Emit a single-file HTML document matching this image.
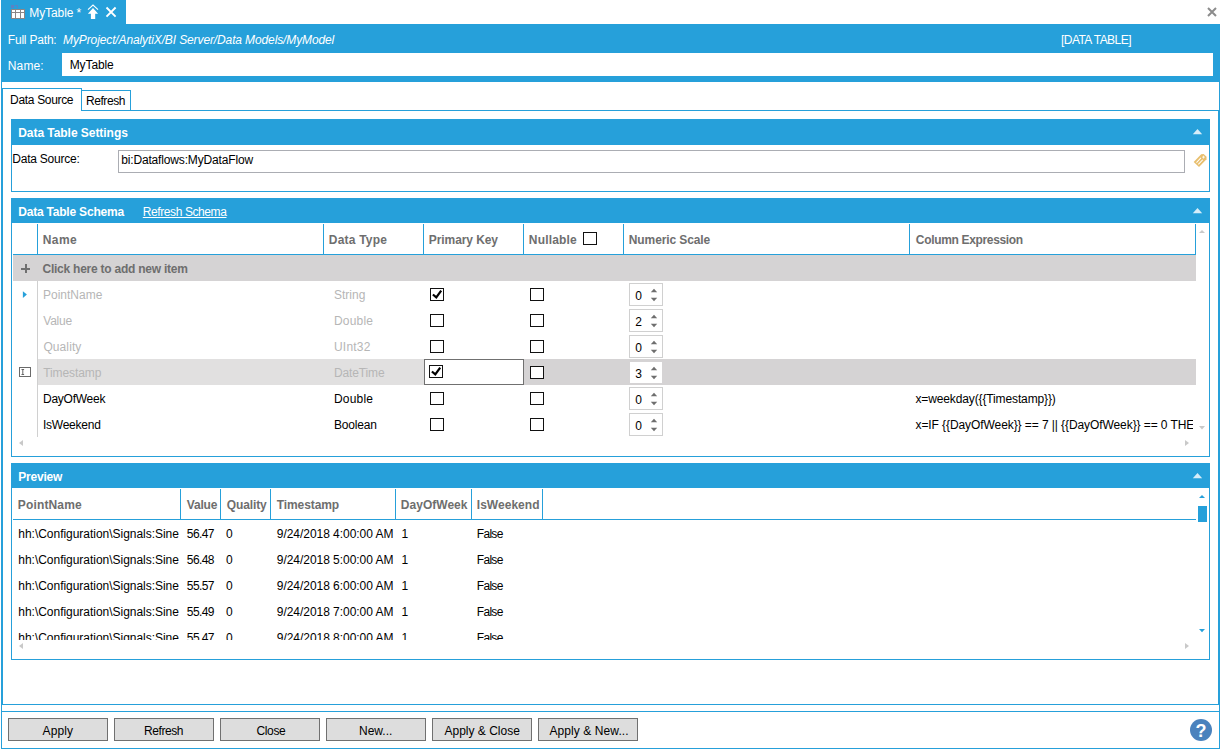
<!DOCTYPE html><html><head><meta charset="utf-8"><title>MyTable</title><style>
html,body{margin:0;padding:0;background:#fff;}
body{width:1220px;height:749px;position:relative;overflow:hidden;font-family:"Liberation Sans",sans-serif;font-size:12px;}
.a{position:absolute;}
.t{position:absolute;white-space:nowrap;line-height:14px;height:14px;font-size:12px;transform-origin:0 0;}
.w{color:#fff;} .k{color:#000;} .d{color:#b6b6b6;} .h{color:#6e6e6e;}
.b{font-weight:bold;} .i{font-style:italic;} .u{text-decoration:underline;}
.bl{background:#26A0DA;}
.cb{position:absolute;width:12px;height:11px;border:1px solid #111;background:#fff;}
.num{position:absolute;width:32px;height:21px;border:1px solid #d0d0d0;background:#fff;}
.btn{position:absolute;top:718px;width:98px;height:21px;border:1px solid #707070;background:#dddddd;}
.clip{position:absolute;overflow:hidden;}
</style></head><body>
<div class="a" style="left:1px;top:0px;width:1px;height:749px;background:#26A0DA;"></div>
<div class="a" style="left:1219px;top:24px;width:1px;height:725px;background:#26A0DA;"></div>
<div class="a" style="left:1px;top:748px;width:1219px;height:1px;background:#26A0DA;"></div>
<div class="a" style="left:1px;top:0px;width:125px;height:24px;background:#26A0DA;"></div>
<div class="a" style="left:1px;top:24px;width:1219px;height:58px;background:#26A0DA;"></div>
<div class="a" style="left:62px;top:53px;width:1151px;height:23px;background:#fff;"></div>
<div class="a" style="left:2px;top:110px;width:1217px;height:1px;background:#26A0DA;"></div>
<div class="a" style="left:2px;top:88px;width:1px;height:617px;background:#26A0DA;"></div>
<div class="a" style="left:1218px;top:110px;width:1px;height:595px;background:#26A0DA;"></div>
<div class="a" style="left:2px;top:704px;width:1217px;height:1px;background:#26A0DA;"></div>
<div class="a" style="left:2px;top:711px;width:1217px;height:1px;background:#26A0DA;"></div>
<div class="a" style="left:2px;top:88px;width:80px;height:1px;background:#26A0DA;"></div>
<div class="a" style="left:81px;top:88px;width:1px;height:23px;background:#26A0DA;"></div>
<div class="a" style="left:3px;top:110px;width:78px;height:1px;background:#fff;"></div>
<div class="a" style="left:81px;top:90px;width:50px;height:1px;background:#26A0DA;"></div>
<div class="a" style="left:130px;top:90px;width:1px;height:20px;background:#26A0DA;"></div>
<div class="a" style="left:11px;top:119px;width:1199px;height:73px;background:#26A0DA;"></div>
<div class="a" style="left:12px;top:145px;width:1197px;height:46px;background:#fff;"></div>
<svg class="a" style="left:1191px;top:128px" width="13" height="8" viewBox="0 0 13 8"><path d="M1.8 6.2 L6.5 1 L11.2 6.2 Z" fill="#d6edf9"/></svg>
<div class="a" style="left:118px;top:150px;width:1065px;height:21px;border:1px solid #abadb3;background:#fff"></div>
<svg class="a" style="left:1192px;top:152px" width="17" height="17" viewBox="0 0 17 17"><g transform="translate(8.45 8.3) rotate(-46)"><path d="M-5.9 -3.7 H4.9 L6.7 -2 V2 L4.9 3.7 H-5.9 Z" fill="#e8bf6e"/><path d="M-4.4 -1.3H2M-4.4 1.3H2" stroke="#fff" stroke-width="1"/><path d="M3.4 -1 L5.4 1 M5.4 -1 L3.4 1" stroke="#fff" stroke-width="0.7"/></g></svg>
<div class="a" style="left:11px;top:198px;width:1199px;height:259px;background:#26A0DA;"></div>
<div class="a" style="left:12px;top:223px;width:1197px;height:233px;background:#fff;"></div>
<svg class="a" style="left:1191px;top:207px" width="13" height="8" viewBox="0 0 13 8"><path d="M1.8 6.2 L6.5 1 L11.2 6.2 Z" fill="#d6edf9"/></svg>
<div class="a" style="left:37px;top:224px;width:1px;height:30px;background:#26A0DA;"></div>
<div class="a" style="left:323px;top:224px;width:1px;height:30px;background:#26A0DA;"></div>
<div class="a" style="left:423px;top:224px;width:1px;height:30px;background:#26A0DA;"></div>
<div class="a" style="left:523px;top:224px;width:1px;height:30px;background:#26A0DA;"></div>
<div class="a" style="left:623px;top:224px;width:1px;height:30px;background:#26A0DA;"></div>
<div class="a" style="left:909px;top:224px;width:1px;height:30px;background:#26A0DA;"></div>
<div class="a" style="left:1195px;top:224px;width:1px;height:30px;background:#26A0DA;"></div>
<div class="a" style="left:13px;top:254px;width:1183px;height:1px;background:#26A0DA;"></div>
<div class="a" style="left:13px;top:255px;width:1183px;height:26px;background:#d5d3d4;"></div>
<div class="a" style="left:21px;top:267.7px;width:9.3px;height:2px;background:#707070;"></div>
<div class="a" style="left:24.6px;top:263.8px;width:2px;height:9.6px;background:#707070;"></div>
<div class="a" style="left:37px;top:281px;width:1px;height:156px;background:#d0d0d0;"></div>
<div class="a" style="left:38px;top:359px;width:386px;height:26px;background:#e1e0e0;"></div>
<div class="a" style="left:424px;top:359px;width:772px;height:26px;background:#d5d3d4;"></div>
<div class="a" style="left:424px;top:359px;width:98px;height:24px;border:1px solid #707070;background:#fff"></div>
<svg class="a" style="left:21px;top:290px" width="7" height="10" viewBox="0 0 7 10"><path d="M1.9 1.2 L5.9 4.6 L1.9 8 Z" fill="#26A0DA"/></svg>
<svg class="a" style="left:19px;top:367px" width="12" height="10" viewBox="0 0 12 10"><rect x="0.5" y="0.5" width="11" height="9" fill="#fff" stroke="#6a6a6a" stroke-width="1"/><path d="M2.5 2.5h2.6M3.8 2.5v5M2.5 7.5h2.6" stroke="#666" stroke-width="1" fill="none"/></svg>
<div class="cb" style="left:583px;top:232px"></div>
<div class="cb" style="left:430px;top:288px"></div>
<div class="cb" style="left:530px;top:288px"></div>
<svg class="a" style="left:430px;top:288px" width="14" height="13" viewBox="0 0 14 13"><path d="M2.9 6.5 L6.3 9.4 L11.2 2.7" stroke="#000" stroke-width="2.2" fill="none"/></svg>
<div class="num" style="left:629px;top:283px"></div>
<svg class="a" style="left:649px;top:287px" width="10" height="7" viewBox="0 0 10 7"><path d="M1.8 5.2 L5 1.8 L8.2 5.2 Z" fill="#6e6e6e"/></svg>
<svg class="a" style="left:649px;top:296px" width="10" height="7" viewBox="0 0 10 7"><path d="M1.8 1.8 L5 5.2 L8.2 1.8 Z" fill="#6e6e6e"/></svg>
<div class="cb" style="left:430px;top:314px"></div>
<div class="cb" style="left:530px;top:314px"></div>
<div class="num" style="left:629px;top:309px"></div>
<svg class="a" style="left:649px;top:313px" width="10" height="7" viewBox="0 0 10 7"><path d="M1.8 5.2 L5 1.8 L8.2 5.2 Z" fill="#6e6e6e"/></svg>
<svg class="a" style="left:649px;top:322px" width="10" height="7" viewBox="0 0 10 7"><path d="M1.8 1.8 L5 5.2 L8.2 1.8 Z" fill="#6e6e6e"/></svg>
<div class="cb" style="left:430px;top:340px"></div>
<div class="cb" style="left:530px;top:340px"></div>
<div class="num" style="left:629px;top:335px"></div>
<svg class="a" style="left:649px;top:339px" width="10" height="7" viewBox="0 0 10 7"><path d="M1.8 5.2 L5 1.8 L8.2 5.2 Z" fill="#6e6e6e"/></svg>
<svg class="a" style="left:649px;top:348px" width="10" height="7" viewBox="0 0 10 7"><path d="M1.8 1.8 L5 5.2 L8.2 1.8 Z" fill="#6e6e6e"/></svg>
<div class="cb" style="left:429px;top:365px"></div>
<div class="cb" style="left:530px;top:366px"></div>
<svg class="a" style="left:429px;top:365px" width="14" height="13" viewBox="0 0 14 13"><path d="M2.9 6.5 L6.3 9.4 L11.2 2.7" stroke="#000" stroke-width="2.2" fill="none"/></svg>
<div class="a" style="left:630px;top:362px;width:32px;height:21px;background:#fff;"></div>
<svg class="a" style="left:649px;top:365px" width="10" height="7" viewBox="0 0 10 7"><path d="M1.8 5.2 L5 1.8 L8.2 5.2 Z" fill="#6e6e6e"/></svg>
<svg class="a" style="left:649px;top:374px" width="10" height="7" viewBox="0 0 10 7"><path d="M1.8 1.8 L5 5.2 L8.2 1.8 Z" fill="#6e6e6e"/></svg>
<div class="cb" style="left:430px;top:392px"></div>
<div class="cb" style="left:530px;top:392px"></div>
<div class="num" style="left:629px;top:387px"></div>
<svg class="a" style="left:649px;top:391px" width="10" height="7" viewBox="0 0 10 7"><path d="M1.8 5.2 L5 1.8 L8.2 5.2 Z" fill="#6e6e6e"/></svg>
<svg class="a" style="left:649px;top:400px" width="10" height="7" viewBox="0 0 10 7"><path d="M1.8 1.8 L5 5.2 L8.2 1.8 Z" fill="#6e6e6e"/></svg>
<div class="cb" style="left:430px;top:418px"></div>
<div class="cb" style="left:530px;top:418px"></div>
<div class="num" style="left:629px;top:413px"></div>
<svg class="a" style="left:649px;top:417px" width="10" height="7" viewBox="0 0 10 7"><path d="M1.8 5.2 L5 1.8 L8.2 5.2 Z" fill="#6e6e6e"/></svg>
<svg class="a" style="left:649px;top:426px" width="10" height="7" viewBox="0 0 10 7"><path d="M1.8 1.8 L5 5.2 L8.2 1.8 Z" fill="#6e6e6e"/></svg>
<svg class="a" style="left:1198px;top:229px" width="9" height="6" viewBox="0 0 9 6"><path d="M1 4 L4 1 L7 4 Z" fill="#c9c9c9"/></svg>
<svg class="a" style="left:1198px;top:425px" width="9" height="6" viewBox="0 0 9 6"><path d="M1 1 L4 4.4 L7 1 Z" fill="#c9c9c9"/></svg>
<svg class="a" style="left:18px;top:439px" width="7" height="9" viewBox="0 0 7 9"><path d="M5 1 L1 4 L5 7 Z" fill="#c9c9c9"/></svg>
<svg class="a" style="left:1184px;top:439px" width="7" height="9" viewBox="0 0 7 9"><path d="M1 1 L5 4 L1 7 Z" fill="#c9c9c9"/></svg>
<div class="a" style="left:11px;top:463px;width:1199px;height:197px;background:#26A0DA;"></div>
<div class="a" style="left:12px;top:488px;width:1197px;height:171px;background:#fff;"></div>
<svg class="a" style="left:1191px;top:472px" width="13" height="8" viewBox="0 0 13 8"><path d="M1.8 6.2 L6.5 1 L11.2 6.2 Z" fill="#d6edf9"/></svg>
<div class="a" style="left:180px;top:489px;width:1px;height:31px;background:#26A0DA;"></div>
<div class="a" style="left:220px;top:489px;width:1px;height:31px;background:#26A0DA;"></div>
<div class="a" style="left:270px;top:489px;width:1px;height:31px;background:#26A0DA;"></div>
<div class="a" style="left:395px;top:489px;width:1px;height:31px;background:#26A0DA;"></div>
<div class="a" style="left:471px;top:489px;width:1px;height:31px;background:#26A0DA;"></div>
<div class="a" style="left:542px;top:489px;width:1px;height:31px;background:#26A0DA;"></div>
<div class="a" style="left:13px;top:519px;width:1183px;height:1px;background:#26A0DA;"></div>
<svg class="a" style="left:1198px;top:494px" width="9" height="6" viewBox="0 0 9 6"><path d="M1 4 L4 1 L7 4 Z" fill="#26A0DA"/></svg>
<div class="a" style="left:1198px;top:506px;width:9px;height:16px;background:#26A0DA;"></div>
<svg class="a" style="left:1198px;top:628px" width="9" height="6" viewBox="0 0 9 6"><path d="M1 1 L4 4.2 L7 1 Z" fill="#26A0DA"/></svg>
<svg class="a" style="left:18px;top:642px" width="7" height="9" viewBox="0 0 7 9"><path d="M5 1 L1 4 L5 7 Z" fill="#c9c9c9"/></svg>
<svg class="a" style="left:1184px;top:642px" width="7" height="9" viewBox="0 0 7 9"><path d="M1 1 L5 4 L1 7 Z" fill="#c9c9c9"/></svg>
<div class="btn" style="left:8px"></div>
<div class="btn" style="left:114px"></div>
<div class="btn" style="left:220px"></div>
<div class="btn" style="left:326px"></div>
<div class="btn" style="left:432px"></div>
<div class="btn" style="left:538px"></div>
<div class="a" style="left:1190px;top:719px;width:22px;height:22px;border-radius:11px;background:#4a82bd;"></div>
<div class="t" style="left:1195.6px;top:722px;color:#fff;font-weight:bold;font-size:18px;line-height:18px;height:18px">?</div>
<svg class="a" style="left:1206px;top:6px" width="12" height="12" viewBox="0 0 12 12"><path d="M2 2 L10 10 M10 2 L2 10" stroke="#8c8c8c" stroke-width="2" fill="none"/></svg>
<div class="a" style="left:11px;top:9px;width:14px;height:10px;background:#8b8686;"></div>
<div class="a" style="left:12px;top:10px;width:3px;height:2px;background:#fff;"></div>
<div class="a" style="left:16px;top:10px;width:4px;height:2px;background:#fff;"></div>
<div class="a" style="left:21px;top:10px;width:3px;height:2px;background:#fff;"></div>
<div class="a" style="left:12px;top:13px;width:3px;height:5px;background:#fff;"></div>
<div class="a" style="left:16px;top:13px;width:4px;height:5px;background:#fff;"></div>
<div class="a" style="left:21px;top:13px;width:3px;height:5px;background:#fff;"></div>
<div class="a" style="left:11px;top:5px;width:3px;height:3px;background:#5b82c4;"></div>
<div class="a" style="left:15px;top:5px;width:3px;height:1px;background:#5b82c4;"></div>
<div class="a" style="left:17px;top:5px;width:1px;height:3px;background:#5b82c4;"></div>
<svg class="a" style="left:87px;top:4px" width="12" height="16" viewBox="0 0 12 16"><path d="M1 5.6 L6 1.1 L11 5.6" stroke="#fff" stroke-width="1.1" fill="none"/><path d="M6 4.1 L11.1 9.7 H8.2 V14.9 H3.9 V9.7 H0.9 Z" fill="#fff"/></svg>
<svg class="a" style="left:105px;top:6px" width="12" height="12" viewBox="0 0 12 12"><path d="M1.5 1.5 L10.6 10.6 M10.6 1.5 L1.5 10.6" stroke="#fff" stroke-width="1.9" fill="none"/></svg>
<div class="t w" style="left:29.3px;top:6px;letter-spacing:-0.1px;">MyTable *</div>
<div class="t w" style="left:7.8px;top:33px;letter-spacing:-0.2px;">Full Path:</div>
<div class="t w i" style="left:63.1px;top:33px;letter-spacing:-0.119px;">MyProject/AnalytiX/BI Server/Data Models/MyModel</div>
<div class="t w" style="left:1061px;top:33px;letter-spacing:-0.545px;">[DATA TABLE]</div>
<div class="t w" style="left:7.8px;top:59px;letter-spacing:0.125px;">Name:</div>
<div class="t k" style="left:69.7px;top:58px;letter-spacing:-0.1px;">MyTable</div>
<div class="t k" style="left:10.1px;top:93px;letter-spacing:-0.33px;">Data Source</div>
<div class="t k" style="left:86px;top:94px;letter-spacing:-0.433px;">Refresh</div>
<div class="t w b" style="left:18.2px;top:126px;letter-spacing:-0.044px;">Data Table Settings</div>
<div class="t k" style="left:12.3px;top:152px;letter-spacing:-0.236px;">Data Source:</div>
<div class="t k" style="left:121.2px;top:153px;letter-spacing:-0.155px;">bi:Dataflows:MyDataFlow</div>
<div class="t w b" style="left:18.2px;top:205px;letter-spacing:-0.2px;">Data Table Schema</div>
<div class="t w u" style="left:142.8px;top:205px;letter-spacing:-0.408px;">Refresh Schema</div>
<div class="t h b" style="left:42.8px;top:233px;letter-spacing:0.4px;">Name</div>
<div class="t h b" style="left:328.8px;top:233px;letter-spacing:0.212px;">Data Type</div>
<div class="t h b" style="left:428.8px;top:233px;letter-spacing:-0.08px;">Primary Key</div>
<div class="t h b" style="left:528.8px;top:233px;letter-spacing:0.171px;">Nullable</div>
<div class="t h b" style="left:628.8px;top:233px;letter-spacing:-0.108px;">Numeric Scale</div>
<div class="t h b" style="left:915.8px;top:233px;letter-spacing:-0.331px;">Column Expression</div>
<div class="t h b" style="left:42.5px;top:262px;letter-spacing:-0.24px;">Click here to add new item</div>
<div class="t d" style="left:43px;top:288px;">PointName</div>
<div class="t d" style="left:334px;top:288px;">String</div>
<div class="t k" style="left:635.3px;top:289px;">0</div>
<div class="t d" style="left:43.2px;top:314px;letter-spacing:-0.175px;">Value</div>
<div class="t d" style="left:334px;top:314px;letter-spacing:0.2px;">Double</div>
<div class="t k" style="left:635.3px;top:315px;">2</div>
<div class="t d" style="left:43.4px;top:340px;letter-spacing:0.1px;">Quality</div>
<div class="t d" style="left:334px;top:340px;letter-spacing:0.2px;">UInt32</div>
<div class="t k" style="left:635.3px;top:341px;">0</div>
<div class="t d" style="left:43.2px;top:366px;letter-spacing:-0.088px;">Timestamp</div>
<div class="t d" style="left:334px;top:366px;letter-spacing:-0.143px;">DateTime</div>
<div class="t k" style="left:635.3px;top:367px;">3</div>
<div class="t k" style="left:43px;top:392px;letter-spacing:-0.25px;">DayOfWeek</div>
<div class="t k" style="left:334px;top:392px;letter-spacing:0.2px;">Double</div>
<div class="t k" style="left:635.3px;top:393px;">0</div>
<div class="t k" style="left:43px;top:418px;letter-spacing:-0.25px;">IsWeekend</div>
<div class="t k" style="left:334px;top:418px;letter-spacing:-0.167px;">Boolean</div>
<div class="t k" style="left:635.3px;top:419px;">0</div>
<div class="t k" style="left:915.5px;top:392px;letter-spacing:-0.13px;">x=weekday({{Timestamp}})</div>
<div class="clip" style="left:0;top:0;width:1193px;height:749px"><div class="t k" style="left:915.5px;top:418px;letter-spacing:-0.082px;">x=IF {{DayOfWeek}} == 7 || {{DayOfWeek}} == 0 THEN</div></div>
<div class="t w b" style="left:18.2px;top:470px;letter-spacing:-0.2px;">Preview</div>
<div class="t h b" style="left:17.8px;top:498px;letter-spacing:0.15px;">PointName</div>
<div class="t h b" style="left:186.8px;top:498px;letter-spacing:-0.2px;">Value</div>
<div class="t h b" style="left:226.8px;top:498px;letter-spacing:-0.133px;">Quality</div>
<div class="t h b" style="left:276.8px;top:498px;letter-spacing:-0.1px;">Timestamp</div>
<div class="t h b" style="left:400.8px;top:498px;letter-spacing:0.025px;">DayOfWeek</div>
<div class="t h b" style="left:476.8px;top:498px;letter-spacing:0.025px;">IsWeekend</div>
<div class="t k p" style="left:18.3px;top:527px;letter-spacing:-0.028px;">hh:\Configuration\Signals:Sine</div>
<div class="t k p" style="left:186.8px;top:527px;letter-spacing:-0.575px;">56.47</div>
<div class="t k p" style="left:226.1px;top:527px;">0</div>
<div class="t k p" style="left:276.8px;top:527px;letter-spacing:-0.042px;">9/24/2018 4:00:00 AM</div>
<div class="t k p" style="left:401.5px;top:527px;">1</div>
<div class="t k p" style="left:476.8px;top:527px;letter-spacing:-0.7px;">False</div>
<div class="t k p" style="left:18.3px;top:553px;letter-spacing:-0.028px;">hh:\Configuration\Signals:Sine</div>
<div class="t k p" style="left:186.8px;top:553px;letter-spacing:-0.575px;">56.48</div>
<div class="t k p" style="left:226.1px;top:553px;">0</div>
<div class="t k p" style="left:276.8px;top:553px;letter-spacing:-0.042px;">9/24/2018 5:00:00 AM</div>
<div class="t k p" style="left:401.5px;top:553px;">1</div>
<div class="t k p" style="left:476.8px;top:553px;letter-spacing:-0.7px;">False</div>
<div class="t k p" style="left:18.3px;top:579px;letter-spacing:-0.028px;">hh:\Configuration\Signals:Sine</div>
<div class="t k p" style="left:186.8px;top:579px;letter-spacing:-0.575px;">55.57</div>
<div class="t k p" style="left:226.1px;top:579px;">0</div>
<div class="t k p" style="left:276.8px;top:579px;letter-spacing:-0.042px;">9/24/2018 6:00:00 AM</div>
<div class="t k p" style="left:401.5px;top:579px;">1</div>
<div class="t k p" style="left:476.8px;top:579px;letter-spacing:-0.7px;">False</div>
<div class="t k p" style="left:18.3px;top:605px;letter-spacing:-0.028px;">hh:\Configuration\Signals:Sine</div>
<div class="t k p" style="left:186.8px;top:605px;letter-spacing:-0.575px;">55.49</div>
<div class="t k p" style="left:226.1px;top:605px;">0</div>
<div class="t k p" style="left:276.8px;top:605px;letter-spacing:-0.042px;">9/24/2018 7:00:00 AM</div>
<div class="t k p" style="left:401.5px;top:605px;">1</div>
<div class="t k p" style="left:476.8px;top:605px;letter-spacing:-0.7px;">False</div>
<div class="clip" style="left:0;top:0;width:1196px;height:640px"><div class="t k p" style="left:18.3px;top:631px;letter-spacing:-0.028px;">hh:\Configuration\Signals:Sine</div></div>
<div class="clip" style="left:0;top:0;width:1196px;height:640px"><div class="t k p" style="left:186.8px;top:631px;letter-spacing:-0.575px;">55.47</div></div>
<div class="clip" style="left:0;top:0;width:1196px;height:640px"><div class="t k p" style="left:226.1px;top:631px;">0</div></div>
<div class="clip" style="left:0;top:0;width:1196px;height:640px"><div class="t k p" style="left:276.8px;top:631px;letter-spacing:-0.042px;">9/24/2018 8:00:00 AM</div></div>
<div class="clip" style="left:0;top:0;width:1196px;height:640px"><div class="t k p" style="left:401.5px;top:631px;">1</div></div>
<div class="clip" style="left:0;top:0;width:1196px;height:640px"><div class="t k p" style="left:476.8px;top:631px;letter-spacing:-0.7px;">False</div></div>
<div class="t k" style="left:42.5px;top:724px;letter-spacing:0.125px;">Apply</div>
<div class="t k" style="left:144px;top:724px;letter-spacing:-0.417px;">Refresh</div>
<div class="t k" style="left:256.5px;top:724px;letter-spacing:-0.375px;">Close</div>
<div class="t k" style="left:359px;top:724px;">New...</div>
<div class="t k" style="left:444.5px;top:724px;">Apply &amp; Close</div>
<div class="t k" style="left:549.5px;top:724px;letter-spacing:0.077px;">Apply &amp; New...</div>
</body></html>
